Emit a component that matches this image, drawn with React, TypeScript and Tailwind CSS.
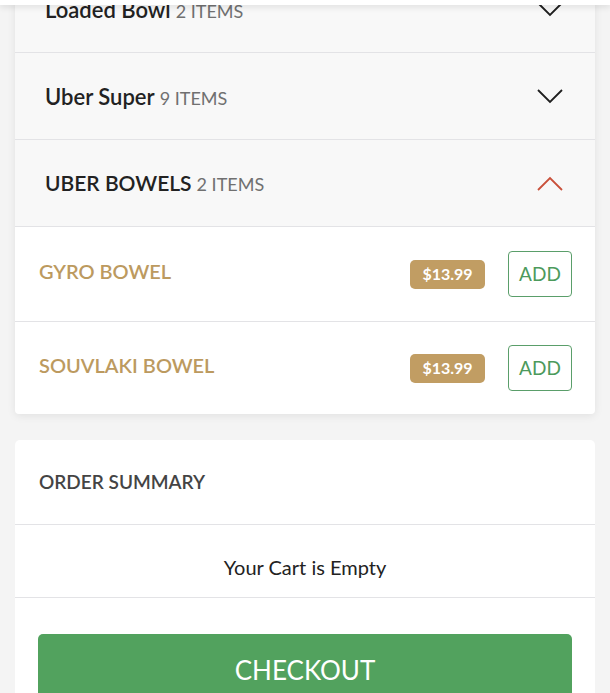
import React from "react";

const font = { fontFamily: '"Lato", "Liberation Sans", sans-serif' };

const Chevron = ({ up = false }: { up?: boolean }) => (
  <svg width="26" height="15" viewBox="0 0 26 15" fill="none">
    <polyline
      points={up ? "1,14 13,2 25,14" : "1,1 13,13 25,1"}
      stroke={up ? "#c9503a" : "#1f1f1f"}
      strokeWidth="1.8"
      strokeLinejoin="miter"
    />
  </svg>
);

const categories = [
  { name: "Loaded Bowl", count: 2, open: false },
  { name: "Uber Super", count: 9, open: false },
  { name: "UBER BOWELS", count: 2, open: true },
];

const items = ["GYRO BOWEL", "SOUVLAKI BOWEL"];

export default function App() {
  return (
    <div
      className="relative h-[693px] w-[610px] overflow-hidden bg-[#f4f4f4]"
      style={font}
    >
      {/* fixed header edge */}
      <div className="absolute left-0 right-0 top-0 z-10 h-[5px] bg-white shadow-[0_2px_6px_rgba(0,0,0,0.12)]" />

      <div className="px-[15px]">
        {/* menu card, scrolled */}
        <div className="-mt-[34px] overflow-hidden rounded-b-[4px] bg-white shadow-[0_2px_8px_rgba(0,0,0,0.08)]">
          {categories.map((c) => (
            <div
              key={c.name}
              className="flex h-[87px] items-center justify-between border-b border-[#e3e3e6] bg-[#f8f8f8] pl-[30px] pr-[32px]"
            >
              <div className="flex items-baseline gap-[5px]">
                <span
                  className={`${
                    c.name === "UBER BOWELS" ? "text-[21px]" : "text-[22px]"
                  } font-semibold text-[#222]`}
                >
                  {c.name}
                </span>
                <span className="text-[18px] text-[#707070]">
                  {c.count} ITEMS
                </span>
              </div>
              <Chevron up={c.open} />
            </div>
          ))}

          {items.map((name, i) => (
            <div
              key={name}
              className={`flex items-center justify-between pl-[24px] pr-[23px] ${
                i === 0 ? "h-[95px] border-b border-[#e3e3e6]" : "h-[92px]"
              }`}
            >
              <span className="pb-[7px] text-[20px] font-semibold text-[#bc9a5f]">
                {name}
              </span>
              <div className="flex items-center gap-[23px]">
                <span className="flex h-[29px] w-[75px] items-center justify-center rounded-[5px] bg-[#c19d63] text-[16px] font-bold text-white">
                  $13.99
                </span>
                <button className="flex h-[46px] w-[64px] items-center justify-center rounded-[4px] border-[1.5px] border-[#5a9e6a] bg-white text-[19px] text-[#4c9a5c]">
                  ADD
                </button>
              </div>
            </div>
          ))}
        </div>

        {/* order summary */}
        <div className="mt-[26px] rounded-t-[5px] bg-white">
          <div className="flex h-[85px] items-center border-b border-[#e3e3e6] px-[24px]">
            <span className="text-[19px] font-semibold text-[#444]">
              ORDER SUMMARY
            </span>
          </div>
          <div className="border-b border-[#e3e3e6] pb-[18px] pt-[30px] text-center text-[20px] leading-[24px] text-[#222]">
            Your Cart is Empty
          </div>
          <div className="px-[23px] pt-[36px]">
            <button className="flex h-[72px] w-full items-center justify-center rounded-[5px] bg-[#52a25e] text-[26px] font-normal text-white">
              CHECKOUT
            </button>
          </div>
        </div>
      </div>
    </div>
  );
}
